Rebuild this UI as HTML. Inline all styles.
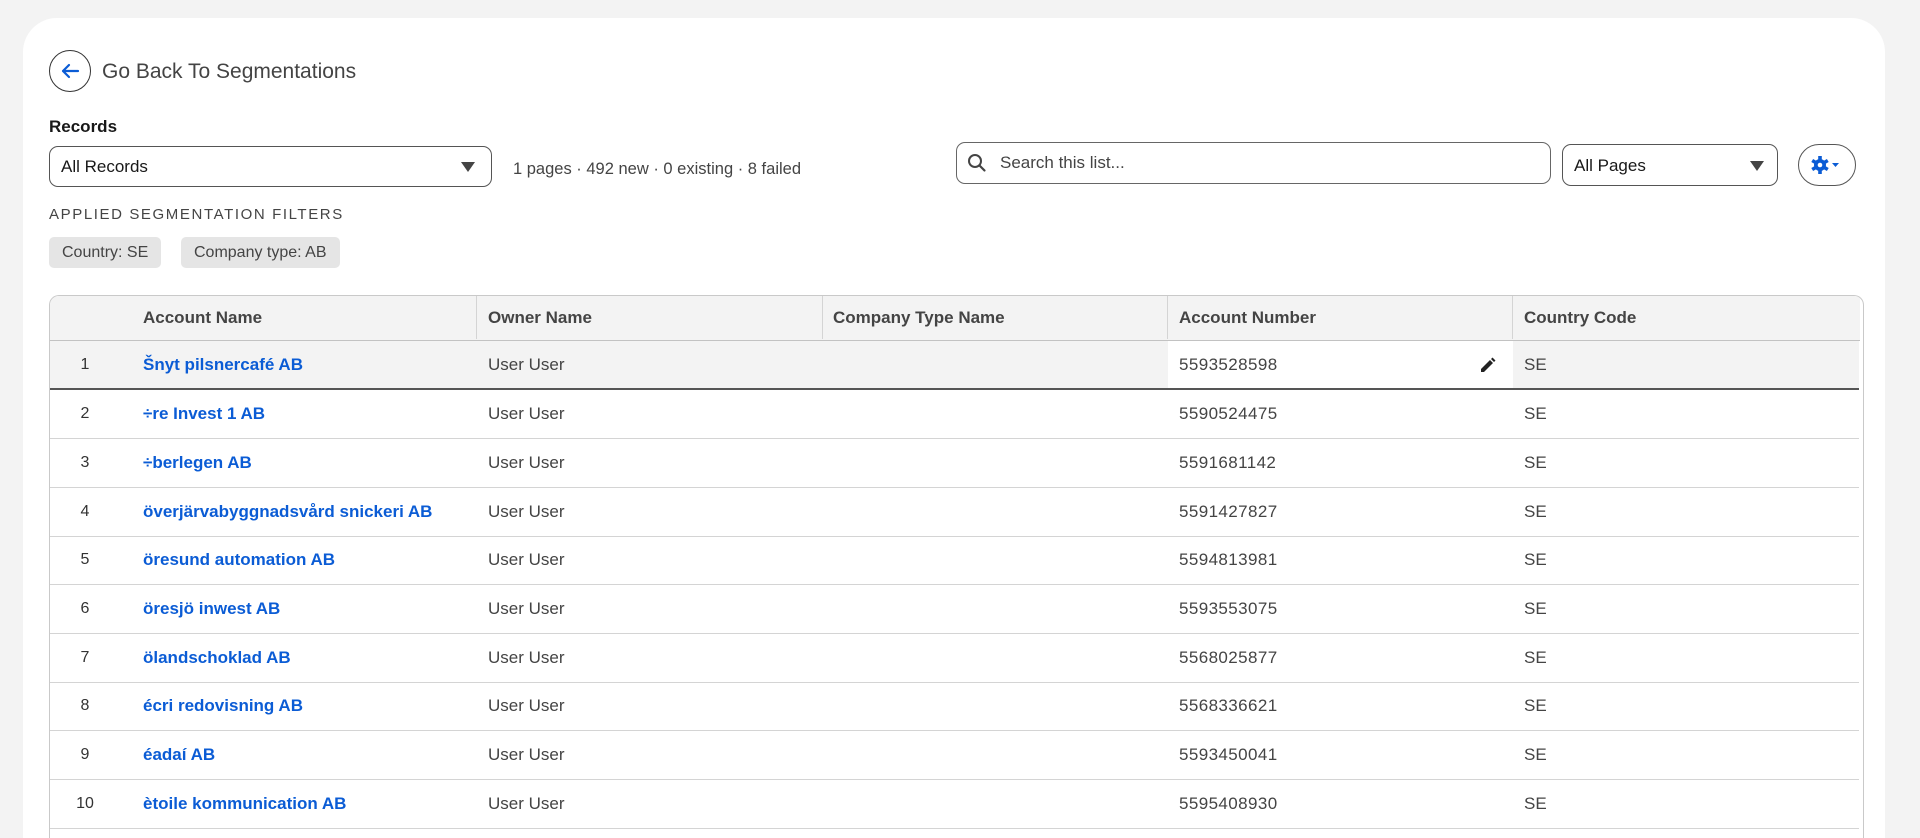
<!DOCTYPE html>
<html><head><meta charset="utf-8"><style>
*{box-sizing:border-box;margin:0;padding:0}
html{width:1920px;height:838px;overflow:hidden}
body{width:1920px;height:838px;overflow:hidden;background:#f3f3f3;font-family:"Liberation Sans",Arial,sans-serif;color:#181818;position:relative}
.card{position:absolute;left:23px;top:18px;width:1862px;height:820px;background:#fff;border-radius:34px 34px 0 0}
.a{position:absolute}
.back{left:49px;top:50px;width:42px;height:42px;border:1.5px solid #333;border-radius:50%}
.sel{border:1.5px solid #555;border-radius:9px;background:#fff}
.chip{background:#e5e5e5;border-radius:5px;height:31px;line-height:31px;font-size:16px;color:#444;padding:0 13px;top:237px}
.tbl{left:49px;top:295px;width:1815px;height:543px;border:1.5px solid #c9c9c9;border-bottom:none;border-radius:10px 10px 0 0;overflow:hidden}
.hdr{position:absolute;left:0;top:0;width:1810px;height:45px;background:#f3f3f3;border-bottom:1.5px solid #c2c2c2}
.hdr span{position:absolute;top:12px;font-size:17px;font-weight:bold;color:#444}
.div{position:absolute;top:0;width:1px;height:43px;background:#d4d4d4}
.row{position:absolute;left:0;width:1809px;height:49px;border-bottom:1.5px solid #d4d4d4;font-size:17px;color:#444}
.row span{position:absolute;top:14px}
.row .n{width:70px;left:0;text-align:center;font-size:16px;color:#333;top:15px}
.row .an{left:93px;color:#0b5cd5;font-weight:bold}
.row .on{left:438px}
.row .ac{left:1129px;letter-spacing:0.4px}
.row .cc{left:1474px}
</style></head><body>
<div class="card"></div>
<div class="a back"><svg width="40" height="40" viewBox="0 0 40 40"><path d="M28 20H13M19 14l-6 6 6 6" fill="none" stroke="#0b5cd5" stroke-width="2.2" stroke-linecap="round" stroke-linejoin="round"/></svg></div>
<div class="a" style="left:102px;top:60px;font-size:21px;color:#444">Go Back To Segmentations</div>
<div class="a" style="left:49px;top:117px;font-size:17px;font-weight:bold">Records</div>
<div class="a sel" style="left:49px;top:146px;width:443px;height:41px"><span class="a" style="left:11px;top:10px;font-size:17px">All Records</span><svg class="a" style="left:410px;top:14px" width="16" height="12"><path d="M1 1h14L8 11z" fill="#444"/></svg></div>
<div class="a" style="left:513px;top:160px;font-size:16.5px;color:#444">1 pages · 492 new · 0 existing · 8 failed</div>
<div class="a sel" style="left:956px;top:142px;width:595px;height:42px;border-color:#666"><svg class="a" style="left:10px;top:10px" width="20" height="20"><circle cx="8" cy="8" r="6" fill="none" stroke="#444" stroke-width="2"/><path d="M12.5 12.5l5 5" stroke="#444" stroke-width="2.2" stroke-linecap="round"/></svg><span class="a" style="left:43px;top:10px;font-size:17px;color:#444">Search this list...</span></div>
<div class="a sel" style="left:1562px;top:144px;width:216px;height:42px"><span class="a" style="left:11px;top:11px;font-size:17px">All Pages</span><svg class="a" style="left:186px;top:15px" width="16" height="12"><path d="M1 1h14L8 11z" fill="#444"/></svg></div>
<div class="a sel" style="left:1798px;top:144px;width:58px;height:42px;border-radius:21px"><svg class="a" style="left:11px;top:10px" width="36" height="20" viewBox="0 0 36 20"><g transform="translate(10,10)" fill="#0b5cd5"><circle r="6"/><g><rect x="-1.8" y="-9" width="3.6" height="18"/><rect x="-1.8" y="-9" width="3.6" height="18" transform="rotate(60)"/><rect x="-1.8" y="-9" width="3.6" height="18" transform="rotate(120)"/></g><circle r="2.3" fill="#fff"/></g><path d="M22 8h7l-3.5 4z" fill="#0b5cd5"/></svg></div>
<div class="a" style="left:49px;top:206px;font-size:15px;letter-spacing:1.6px;color:#444">APPLIED SEGMENTATION FILTERS</div>
<div class="a chip" style="left:49px">Country: SE</div>
<div class="a chip" style="left:181px">Company type: AB</div>
<div class="a tbl">
<div class="hdr"><span style="left:93px">Account Name</span><span style="left:438px">Owner Name</span><span style="left:783px">Company Type Name</span><span style="left:1129px">Account Number</span><span style="left:1474px">Country Code</span>
<div class="div" style="left:426px"></div><div class="div" style="left:772px"></div><div class="div" style="left:1117px"></div><div class="div" style="left:1462px"></div></div>
<div class="row" style="top:45px;background:#f3f3f3;border-bottom:2px solid #555"><div class="a" style="left:1118px;top:0;width:345px;height:47px;background:#fff"></div><span class="n">1</span><span class="an">Šnyt pilsnercafé AB</span><span class="on">User User</span><span class="ac">5593528598</span><svg class="a" style="left:1429px;top:16px" width="17" height="17" viewBox="0 0 17 17"><path d="M2 12l9-9 3 3-9 9H2z M12 2l1.5-1.5 3 3L15 5z" fill="#222"/></svg><span class="cc">SE</span></div>
<div class="row" style="top:94px"><span class="n">2</span><span class="an">÷re Invest 1 AB</span><span class="on">User User</span><span class="ac">5590524475</span><span class="cc">SE</span></div>
<div class="row" style="top:143px"><span class="n">3</span><span class="an">÷berlegen AB</span><span class="on">User User</span><span class="ac">5591681142</span><span class="cc">SE</span></div>
<div class="row" style="top:192px"><span class="n">4</span><span class="an">överjärvabyggnadsvård snickeri AB</span><span class="on">User User</span><span class="ac">5591427827</span><span class="cc">SE</span></div>
<div class="row" style="top:240px"><span class="n">5</span><span class="an">öresund automation AB</span><span class="on">User User</span><span class="ac">5594813981</span><span class="cc">SE</span></div>
<div class="row" style="top:289px"><span class="n">6</span><span class="an">öresjö inwest AB</span><span class="on">User User</span><span class="ac">5593553075</span><span class="cc">SE</span></div>
<div class="row" style="top:338px"><span class="n">7</span><span class="an">ölandschoklad AB</span><span class="on">User User</span><span class="ac">5568025877</span><span class="cc">SE</span></div>
<div class="row" style="top:386px"><span class="n">8</span><span class="an">écri redovisning AB</span><span class="on">User User</span><span class="ac">5568336621</span><span class="cc">SE</span></div>
<div class="row" style="top:435px"><span class="n">9</span><span class="an">éadaí AB</span><span class="on">User User</span><span class="ac">5593450041</span><span class="cc">SE</span></div>
<div class="row" style="top:484px"><span class="n">10</span><span class="an">ètoile kommunication AB</span><span class="on">User User</span><span class="ac">5595408930</span><span class="cc">SE</span></div>
</div>
</body></html>
